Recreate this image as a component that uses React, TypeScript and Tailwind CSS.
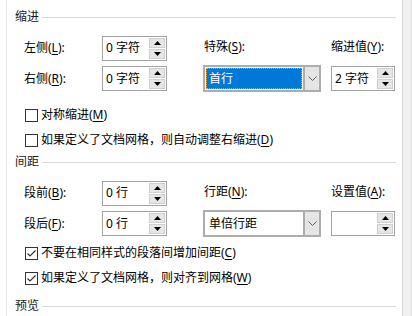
import React from "react";

const U = ({ c }: { c: string }) => <span className="underline underline-offset-[2px]">{c}</span>;

function UpTri() {
  return (
    <svg width="7" height="4" viewBox="0 0 7 4">
      <polygon points="0,4 7,4 3.5,0" fill="#000" />
    </svg>
  );
}
function DownTri() {
  return (
    <svg width="7" height="4" viewBox="0 0 7 4">
      <polygon points="0,0 7,0 3.5,4" fill="#000" />
    </svg>
  );
}

function Spin({ value, wide }: { value: string; wide?: boolean }) {
  return (
    <div className={`flex h-[25px] border border-[#a2a2a2] bg-white ${wide ? "w-[65px]" : "w-[64px]"}`}>
      <div className="flex-1 flex items-center pl-[3px] text-[12px] leading-none">{value}</div>
      <div className="flex flex-col w-[17px] py-[1px] pr-[1px] gap-[1px]">
        <div className="flex-1 bg-[#e6e6e6] border border-[#cfcfcf] flex items-center justify-center">
          <UpTri />
        </div>
        <div className="flex-1 bg-[#e6e6e6] border border-[#cfcfcf] flex items-center justify-center">
          <DownTri />
        </div>
      </div>
    </div>
  );
}

function Chevron() {
  return (
    <svg width="9" height="5" viewBox="0 0 9 5">
      <polyline points="0.5,0.5 4.5,4.5 8.5,0.5" fill="none" stroke="#606060" strokeWidth="1" />
    </svg>
  );
}

function Combo({ value, selected }: { value: string; selected?: boolean }) {
  return (
    <div className="flex h-[27px] w-[118px] border-2 border-[#adadad] bg-white">
      <div className="flex-1 p-[1px] flex">
        {selected ? (
          <div className="flex-1 bg-[#0078d7] border border-dotted border-[#f0a030] text-white flex items-center pl-[2px] text-[12px]">
            {value}
          </div>
        ) : (
          <div className="flex-1 flex items-center pl-[3px] text-[12px]">{value}</div>
        )}
      </div>
      <div className="w-[16px] bg-[#e5e5e5] border-l-2 border-[#adadad] flex items-center justify-center">
        <Chevron />
      </div>
    </div>
  );
}

function Check({ checked, children }: { checked?: boolean; children: React.ReactNode }) {
  return (
    <div className="flex items-center h-[20px] pl-[18px]">
      <div className="w-[13px] h-[13px] border border-[#333] bg-white flex items-center justify-center">
        {checked && (
          <svg width="11" height="11" viewBox="0 0 11 11">
            <polyline points="1.5,5.5 4,8 9.5,2.5" fill="none" stroke="#333" strokeWidth="1.2" />
          </svg>
        )}
      </div>
      <span className="ml-[3px] text-[12px]">{children}</span>
    </div>
  );
}

function Heading({ title }: { title: string }) {
  return (
    <div className="flex items-center h-[20px] pl-[8px] pr-[6px]">
      <span className="text-[12px] text-[#1a1a1a]">{title}</span>
      <div className="flex-1 ml-[3px] h-px bg-[#dadada]" />
    </div>
  );
}

export default function App() {
  return (
    <div
      className="w-[412px] h-[316px] bg-white flex overflow-hidden text-black leading-[16px]"
      style={{ fontFamily: '"Noto Sans", "Noto Sans CJK SC", sans-serif' }}
    >
      <div className="w-[6px]" />
      <div className="w-px bg-[#e6e6e6]" />
      <div className="flex-1 flex flex-col pt-[7px]">
        <Heading title="缩进" />
        {/* row 1 */}
        <div className="flex items-center h-[26px] mt-[8px] pl-[17px]">
          <div className="w-[78px] text-[12px]">
            左侧(<U c="L" />):
          </div>
          <Spin value="0 字符" wide />
          <div className="w-[36px]" />
          <div className="w-[118px] text-[12px] pl-[1px] -mt-[2px]">
            特殊(<U c="S" />):
          </div>
          <div className="w-[10px]" />
          <div className="w-[64px] text-[12px] -mt-[2px]">
            缩进值(<U c="Y" />):
          </div>
        </div>
        {/* row 2 */}
        <div className="flex items-center h-[27px] mt-[4px] pl-[17px]">
          <div className="w-[78px] text-[12px]">
            右侧(<U c="R" />):
          </div>
          <Spin value="0 字符" wide />
          <div className="w-[36px]" />
          <Combo value="首行" selected />
          <div className="w-[10px]" />
          <Spin value="2 字符" />
        </div>
        <div className="mt-[13px]">
          <Check>
            对称缩进(<U c="M" />)
          </Check>
        </div>
        <div className="mt-[5px]">
          <Check>
            如果定义了文档网格，则自动调整右缩进(<U c="D" />)
          </Check>
        </div>
        <div className="mt-[2px]">
          <Heading title="间距" />
        </div>
        {/* row 3 */}
        <div className="flex items-center h-[26px] mt-[8px] pl-[17px]">
          <div className="w-[78px] text-[12px]">
            段前(<U c="B" />):
          </div>
          <Spin value="0 行" wide />
          <div className="w-[36px]" />
          <div className="w-[118px] text-[12px] pl-[1px] -mt-[2px]">
            行距(<U c="N" />):
          </div>
          <div className="w-[10px]" />
          <div className="w-[64px] text-[12px] -mt-[2px]">
            设置值(<U c="A" />):
          </div>
        </div>
        {/* row 4 */}
        <div className="flex items-center h-[27px] mt-[4px] pl-[17px]">
          <div className="w-[78px] text-[12px]">
            段后(<U c="F" />):
          </div>
          <Spin value="0 行" wide />
          <div className="w-[36px]" />
          <Combo value="单倍行距" />
          <div className="w-[10px]" />
          <Spin value="" />
        </div>
        <div className="mt-[6px]">
          <Check checked>
            不要在相同样式的段落间增加间距(<U c="C" />)
          </Check>
        </div>
        <div className="mt-[5px]">
          <Check checked>
            如果定义了文档网格，则对齐到网格(<U c="W" />)
          </Check>
        </div>
        <div className="mt-[8px]">
          <Heading title="预览" />
        </div>
      </div>
      <div className="w-px bg-[#d9d9d9]" />
      <div className="w-[8px] bg-[#f0f0f0]" />
      <div className="w-px bg-[#dcdcdc]" />
    </div>
  );
}
